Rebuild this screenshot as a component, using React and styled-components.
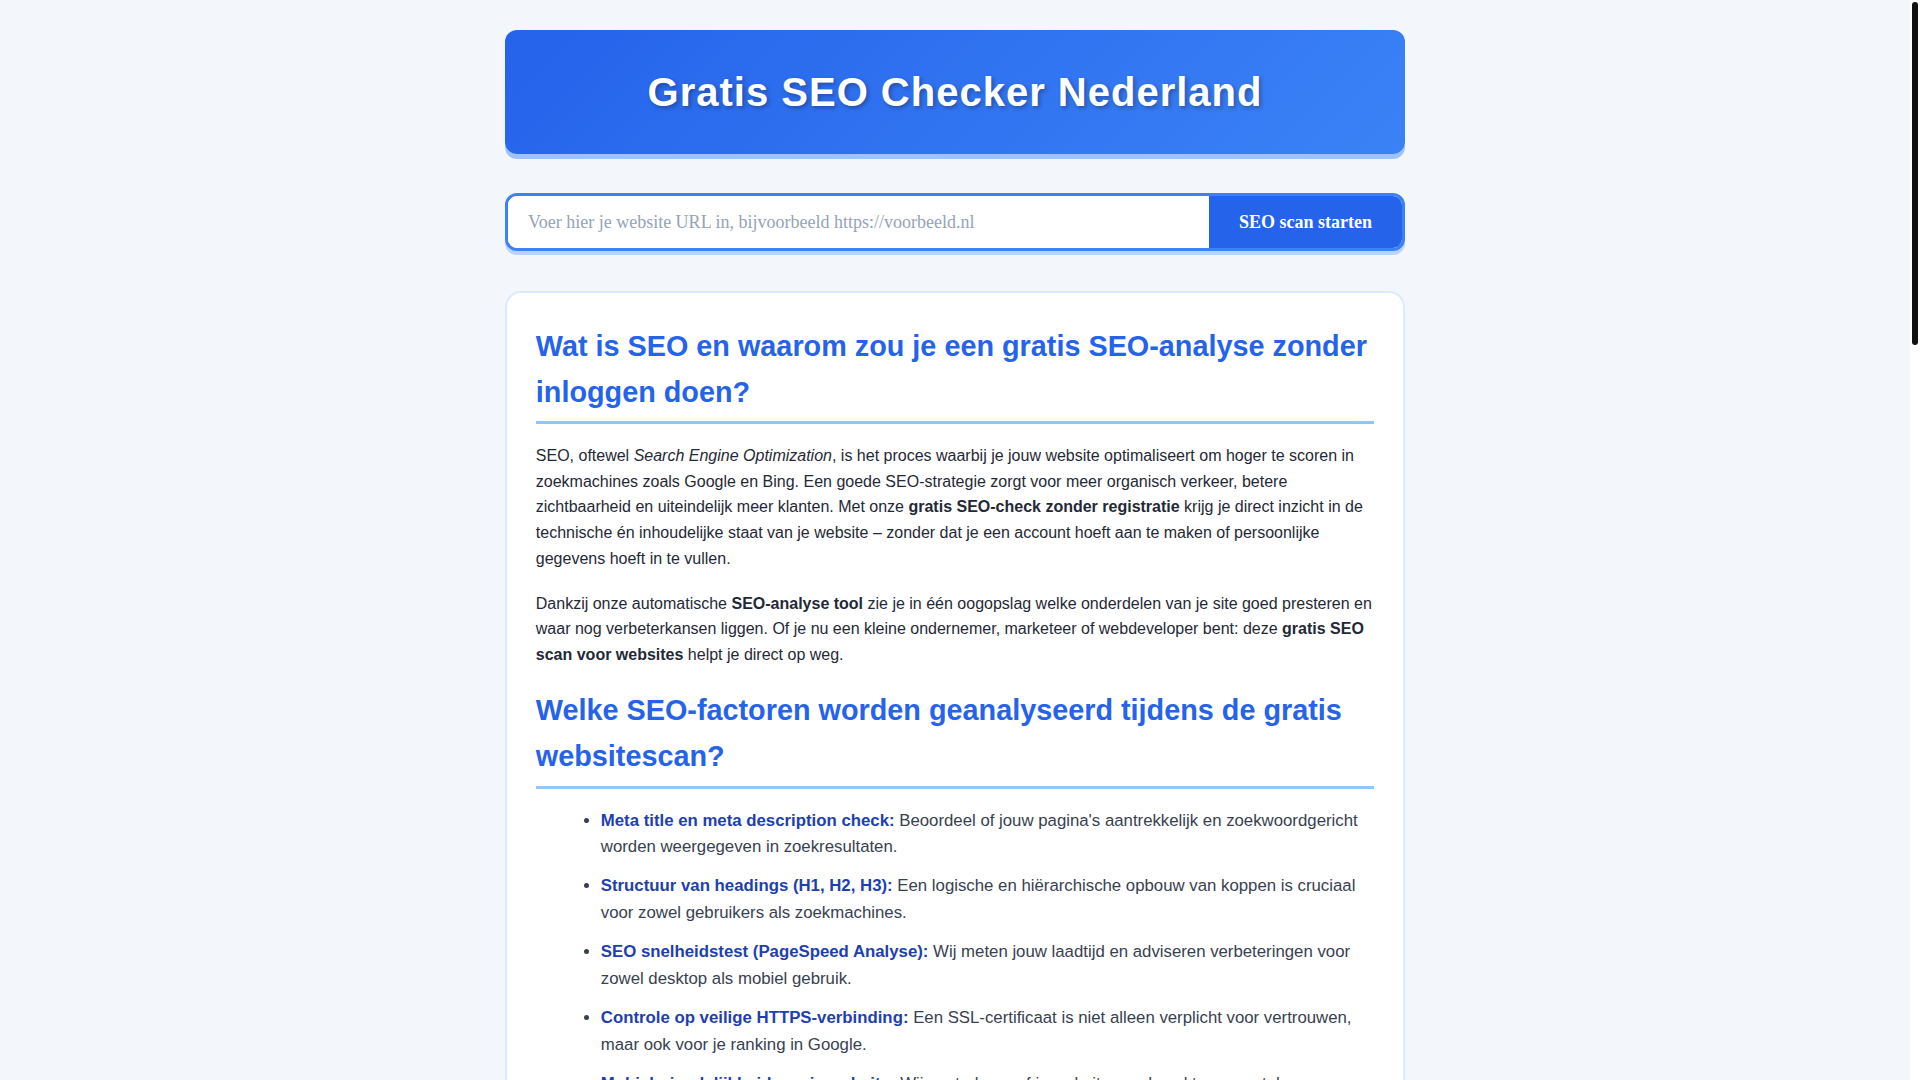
import React from "react";
import styled, { createGlobalStyle } from "styled-components";

const GlobalStyle = createGlobalStyle`
  html, body {
    margin: 0;
    padding: 0;
    background: #f3f6fa;
    overflow: hidden;
  }
  body {
    font-family: "Liberation Sans", Arial, sans-serif;
    color: #1f2937;
  }
`;

const factors = [
  {
    label: "Meta title en meta description check:",
    text: " Beoordeel of jouw pagina's aantrekkelijk en zoekwoordgericht worden weergegeven in zoekresultaten.",
  },
  {
    label: "Structuur van headings (H1, H2, H3):",
    text: " Een logische en hiërarchische opbouw van koppen is cruciaal voor zowel gebruikers als zoekmachines.",
  },
  {
    label: "SEO snelheidstest (PageSpeed Analyse):",
    text: " Wij meten jouw laadtijd en adviseren verbeteringen voor zowel desktop als mobiel gebruik.",
  },
  {
    label: "Controle op veilige HTTPS-verbinding:",
    text: " Een SSL-certificaat is niet alleen verplicht voor vertrouwen, maar ook voor je ranking in Google.",
  },
  {
    label: "Mobielvriendelijkheid van je website:",
    text: " Wij controleren of je website goed werkt op smartphones en tablets, want Google indexeert mobiel eerst.",
  },
  {
    label: "Afbeeldingen en alt-teksten:",
    text: " Ontbrekende alt-attributen en te zware afbeeldingen kosten je zowel snelheid als vindbaarheid.",
  },
  {
    label: "Interne en externe links:",
    text: " Gebroken links en een zwakke interne linkstructuur worden direct zichtbaar in het rapport.",
  },
  {
    label: "Canonical tags en robots.txt:",
    text: " Voorkom dubbele content en zorg dat zoekmachines precies weten welke pagina's geïndexeerd mogen worden.",
  },
];

const steps = [
  {
    label: "Vul je URL in:",
    text: " Typ het adres van je website in het invoerveld bovenaan deze pagina.",
  },
  {
    label: "Start de SEO scan:",
    text: " Klik op de knop en onze tool analyseert binnen enkele seconden je pagina.",
  },
  {
    label: "Bekijk je rapport:",
    text: " Je krijgt een overzicht van sterke punten, verbeterpunten en concrete adviezen.",
  },
  {
    label: "Ga aan de slag:",
    text: " Pas de aanbevelingen toe en voer de scan opnieuw uit om je vooruitgang te meten.",
  },
];

const tips = [
  {
    label: "Schrijf unieke titels:",
    text: " Geef elke pagina een eigen, pakkende title van maximaal 60 tekens met je belangrijkste zoekwoord.",
  },
  {
    label: "Comprimeer je afbeeldingen:",
    text: " Gebruik moderne formaten zoals WebP en laad afbeeldingen pas wanneer ze in beeld komen.",
  },
  {
    label: "Werk aan je interne links:",
    text: " Verwijs vanuit relevante teksten naar je belangrijkste pagina's zodat bezoekers en zoekmachines ze makkelijk vinden.",
  },
  {
    label: "Publiceer regelmatig nieuwe content:",
    text: " Actuele en waardevolle artikelen laten zien dat je website leeft en vergroten je autoriteit.",
  },
  {
    label: "Zorg voor een snelle hosting:",
    text: " Een trage server kost bezoekers en posities, kies daarom voor betrouwbare en snelle hosting.",
  },
];

const faqs = [
  {
    q: "Is de SEO checker echt helemaal gratis?",
    a: "Ja, je kunt onbeperkt websites scannen zonder kosten, zonder abonnement en zonder dat je hoeft in te loggen of een account hoeft aan te maken.",
  },
  {
    q: "Hoe vaak moet ik mijn website laten controleren?",
    a: "Wij raden aan om minimaal één keer per maand een SEO-analyse uit te voeren, en zeker na grote wijzigingen aan je website of na het publiceren van nieuwe pagina's.",
  },
  {
    q: "Werkt de tool ook voor webshops en WordPress-sites?",
    a: "Zeker. De scan werkt voor elke openbaar bereikbare website, ongeacht het CMS of platform waarop de site gebouwd is.",
  },
  {
    q: "Worden mijn gegevens opgeslagen?",
    a: "Nee. We bewaren geen persoonlijke gegevens en de resultaten van je scan zijn alleen voor jou zichtbaar.",
  },
  {
    q: "Kan ik ook de website van een concurrent analyseren?",
    a: "Ja, je kunt elke openbare URL invoeren. Zo zie je direct waar concurrenten sterker of zwakker scoren dan jij.",
  },
];

const App = () => {
  return (
    <>
      <GlobalStyle />
      <Scroller>
        <Page>
          <Header>
            <Title>Gratis SEO Checker Nederland</Title>
          </Header>

          <Form onSubmit={(e) => e.preventDefault()}>
            <UrlInput
              type="text"
              placeholder="Voer hier je website URL in, bijvoorbeeld https://voorbeeld.nl"
            />
            <ScanButton type="submit">SEO scan starten</ScanButton>
          </Form>

          <Card>
            <H2>Wat is SEO en waarom zou je een gratis SEO-analyse zonder inloggen doen?</H2>
            <P>
              SEO, oftewel <em>Search Engine Optimization</em>, is het proces waarbij je jouw
              website optimaliseert om hoger te scoren in zoekmachines zoals Google en Bing. Een
              goede SEO-strategie zorgt voor meer organisch verkeer, betere zichtbaarheid en
              uiteindelijk meer klanten. Met onze <strong>gratis SEO-check zonder registratie</strong>{" "}
              krijg je direct inzicht in de technische én inhoudelijke staat van je website –
              zonder dat je een account hoeft aan te maken of persoonlijke gegevens hoeft in te
              vullen.
            </P>
            <P>
              Dankzij onze automatische <strong>SEO-analyse tool</strong> zie je in één oogopslag
              welke onderdelen van je site goed presteren en waar nog verbeterkansen liggen. Of je
              nu een kleine ondernemer, marketeer of webdeveloper bent: deze{" "}
              <strong>gratis SEO scan voor websites</strong> helpt je direct op weg.
            </P>

            <H2>Welke SEO-factoren worden geanalyseerd tijdens de gratis websitescan?</H2>
            <List>
              {factors.map((f) => (
                <Item key={f.label}>
                  <Label>{f.label}</Label>
                  {f.text}
                </Item>
              ))}
            </List>

            <H2>Hoe werkt onze gratis SEO checker?</H2>
            <P>
              Het gebruik van de tool is eenvoudig en vraagt geen technische kennis. In vier
              stappen weet je precies hoe jouw website ervoor staat:
            </P>
            <List as="ol">
              {steps.map((s) => (
                <Item key={s.label}>
                  <Label>{s.label}</Label>
                  {s.text}
                </Item>
              ))}
            </List>

            <H2>Waarom is technische SEO zo belangrijk?</H2>
            <P>
              Zelfs de beste teksten leveren weinig op als zoekmachines je pagina's niet goed
              kunnen lezen. Technische SEO zorgt ervoor dat je website snel laadt, veilig is en
              zonder fouten door Google gecrawld en geïndexeerd kan worden.
            </P>
            <P>
              Met de <strong>gratis website SEO check</strong> ontdek je problemen die je met het
              blote oog niet ziet, zoals ontbrekende meta-tags, dubbele titels, trage scripts of
              een verkeerd ingestelde robots.txt. Door deze punten op te lossen leg je een stevige
              basis voor betere posities in de zoekresultaten.
            </P>

            <H2>Praktische tips om je SEO-score te verbeteren</H2>
            <List>
              {tips.map((t) => (
                <Item key={t.label}>
                  <Label>{t.label}</Label>
                  {t.text}
                </Item>
              ))}
            </List>

            <H2>Veelgestelde vragen over de gratis SEO-analyse</H2>
            {faqs.map((f) => (
              <Faq key={f.q}>
                <H3>{f.q}</H3>
                <P>{f.a}</P>
              </Faq>
            ))}

            <H2>Verbeter vandaag nog je online zichtbaarheid</H2>
            <P>
              Wacht niet langer en ontdek binnen enkele seconden waar jouw website kansen laat
              liggen. Voer je URL in, start de <strong>gratis SEO scan</strong> en zet de eerste
              stap naar een hogere positie in Google.
            </P>
          </Card>

          <Footer>© 2025 Gratis SEO Checker Nederland – Alle rechten voorbehouden</Footer>
        </Page>
      </Scroller>
      <ScrollTrack aria-hidden="true">
        <ScrollThumb />
      </ScrollTrack>
    </>
  );
};

export default App;

const Scroller = styled.div`
  height: 100vh;
  overflow-y: auto;
  padding-right: 10px;
  box-sizing: border-box;
  scrollbar-width: none;
`;

const ScrollTrack = styled.div`
  position: fixed;
  top: 0;
  right: 0;
  width: 10px;
  height: 100vh;
  background: #ffffff;
`;

const ScrollThumb = styled.div`
  margin: 2px 2px 0 2px;
  width: 6px;
  height: 343px;
  background: #111111;
  border-radius: 3px;
`;

const Page = styled.div`
  max-width: 900px;
  margin: 0 auto;
  padding: 30px 0 40px;
`;

const Header = styled.header`
  background: linear-gradient(135deg, #2563eb 0%, #3b82f6 100%);
  border-radius: 12px;
  padding: 39px 20px;
  margin-bottom: 39px;
  box-shadow: 0 5px 0 rgba(59, 130, 246, 0.45);
  text-align: center;
`;

const Title = styled.h1`
  margin: 0;
  color: #ffffff;
  font-size: 40px;
  line-height: 46px;
  font-weight: bold;
  letter-spacing: 1px;
  text-shadow: 2px 2px 4px rgba(0, 0, 0, 0.3);
`;

const Form = styled.form`
  display: flex;
  border: 3px solid #3b82f6;
  border-radius: 12px;
  background: #ffffff;
  overflow: hidden;
  margin-bottom: 40px;
  box-shadow: 0 4px 0 rgba(59, 130, 246, 0.3);
`;

const UrlInput = styled.input`
  flex: 1;
  height: 52px;
  border: none;
  outline: none;
  padding: 0 20px;
  font-family: "Liberation Serif", "Times New Roman", serif;
  font-size: 18px;
  color: #1f2937;
  background: #ffffff;

  &::placeholder {
    color: #94a3b8;
  }
`;

const ScanButton = styled.button`
  border: none;
  background: #2563eb;
  color: #ffffff;
  font-family: "Liberation Serif", "Times New Roman", serif;
  font-size: 18px;
  font-weight: bold;
  padding: 0 30px;
  border-radius: 0 8px 8px 0;
  cursor: pointer;
`;

const Card = styled.main`
  background: #ffffff;
  border: 2px solid #dbeafe;
  border-radius: 16px;
  padding: 30px 28.8px;
`;

const H2 = styled.h2`
  color: #2563eb;
  font-size: 28.8px;
  line-height: 1.6;
  font-weight: bold;
  margin: 20px 0 19px;
  padding-bottom: 6px;
  border-bottom: 3px solid #93c5fd;

  &:first-child {
    margin-top: 0;
  }
`;

const H3 = styled.h3`
  color: #1e40af;
  font-size: 19px;
  line-height: 1.5;
  margin: 0 0 6px;
`;

const P = styled.p`
  font-size: 16px;
  line-height: 1.6;
  margin: 0 0 19.5px;
  color: #1f2937;

  strong {
    font-weight: bold;
  }
`;

const List = styled.ul`
  margin: 0 0 20px;
  padding-left: 65px;
`;

const Item = styled.li`
  font-size: 16.8px;
  line-height: 1.6;
  color: #374151;
  margin-bottom: 12px;
`;

const Label = styled.strong`
  color: #1e40af;
  font-weight: bold;
`;

const Faq = styled.div`
  margin-bottom: 6px;
`;

const Footer = styled.footer`
  text-align: center;
  color: #64748b;
  font-size: 14px;
  margin-top: 30px;
`;
